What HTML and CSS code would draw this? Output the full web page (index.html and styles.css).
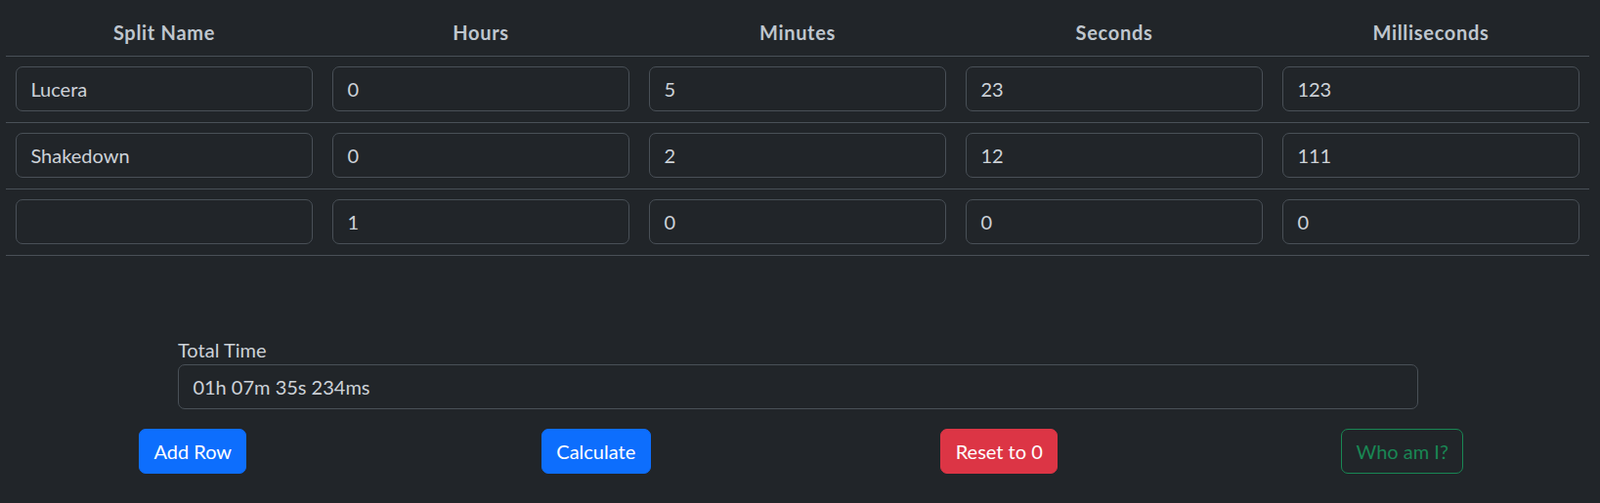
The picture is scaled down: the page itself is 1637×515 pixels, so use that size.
FILE: index.html
```html
<!DOCTYPE html>
<html lang="en">
<head>
<meta charset="utf-8">
<title>Split Calculator</title>
<link rel="stylesheet" href="styles.css">
</head>
<body>
<main class="page">
  <table class="splits">
    <thead>
      <tr>
        <th>Split Name</th>
        <th>Hours</th>
        <th>Minutes</th>
        <th>Seconds</th>
        <th>Milliseconds</th>
      </tr>
    </thead>
    <tbody>
      <tr>
        <td><input class="field" type="text" value="Lucera"></td>
        <td><input class="field" type="text" value="0"></td>
        <td><input class="field" type="text" value="5"></td>
        <td><input class="field" type="text" value="23"></td>
        <td><input class="field" type="text" value="123"></td>
      </tr>
      <tr>
        <td><input class="field" type="text" value="Shakedown"></td>
        <td><input class="field" type="text" value="0"></td>
        <td><input class="field" type="text" value="2"></td>
        <td><input class="field" type="text" value="12"></td>
        <td><input class="field" type="text" value="111"></td>
      </tr>
      <tr>
        <td><input class="field" type="text" value=""></td>
        <td><input class="field" type="text" value="1"></td>
        <td><input class="field" type="text" value="0"></td>
        <td><input class="field" type="text" value="0"></td>
        <td><input class="field" type="text" value="0"></td>
      </tr>
    </tbody>
  </table>

  <section class="total">
    <label class="total-label" for="total">Total Time</label>
    <input id="total" class="field" type="text" value="01h 07m 35s 234ms" readonly>
  </section>

  <div class="actions">
    <div class="cell"><button class="btn btn-primary">Add Row</button></div>
    <div class="cell"><button class="btn btn-primary">Calculate</button></div>
    <div class="cell"><button class="btn btn-danger">Reset to 0</button></div>
    <div class="cell"><button class="btn btn-outline-success">Who am I?</button></div>
  </div>
</main>
</body>
</html>
```

FILE: styles.css
```css
* {
  box-sizing: border-box;
}

html, body {
  margin: 0;
  background: #212529;
}

body {
  font-family: Lato, "Noto Sans", "Liberation Sans", sans-serif;
  font-size: 20px;
  line-height: 28.8px;
  color: #cdd2d8;
  overflow: hidden;
}

.page {
  padding: 9px 11px 0 6px;
}

.splits {
  width: 1620px;
  border-collapse: collapse;
  table-layout: fixed;
}

.splits th {
  font-size: 20px;
  font-weight: 700;
  letter-spacing: 0.7px;
  text-align: center;
  padding: 9.6px 10px;
  border-bottom: 1px solid #495057;
  color: #bfc6ce;
}

.splits td {
  padding: 10.5px 10px;
  border-bottom: 1px solid #495057;
}

.field {
  display: block;
  width: 100%;
  height: 46px;
  padding: 0 14.4px;
  font-family: inherit;
  font-size: 20px;
  color: #cdd2d8;
  background: #212529;
  border: 1px solid #495057;
  border-radius: 7px;
  outline: none;
}

.total {
  width: 1269px;
  margin: 82px auto 0 176px;
}

.total-label {
  display: block;
  line-height: 28.8px;
}

.actions {
  display: grid;
  grid-template-columns: repeat(4, 412.5px);
  margin: 20px 0 0 -15px;
}

.cell {
  display: flex;
  justify-content: center;
}

.btn {
  height: 46px;
  padding: 0 14.4px;
  font-family: inherit;
  font-size: 20px;
  border: 1px solid transparent;
  border-radius: 7px;
  color: #fff;
  cursor: pointer;
}

.btn-primary {
  background: #0d6efd;
  border-color: #0d6efd;
}

.btn-danger {
  background: #dc3545;
  border-color: #dc3545;
}

.btn-outline-success {
  background: transparent;
  color: #198754;
  border-color: #198754;
}
```
